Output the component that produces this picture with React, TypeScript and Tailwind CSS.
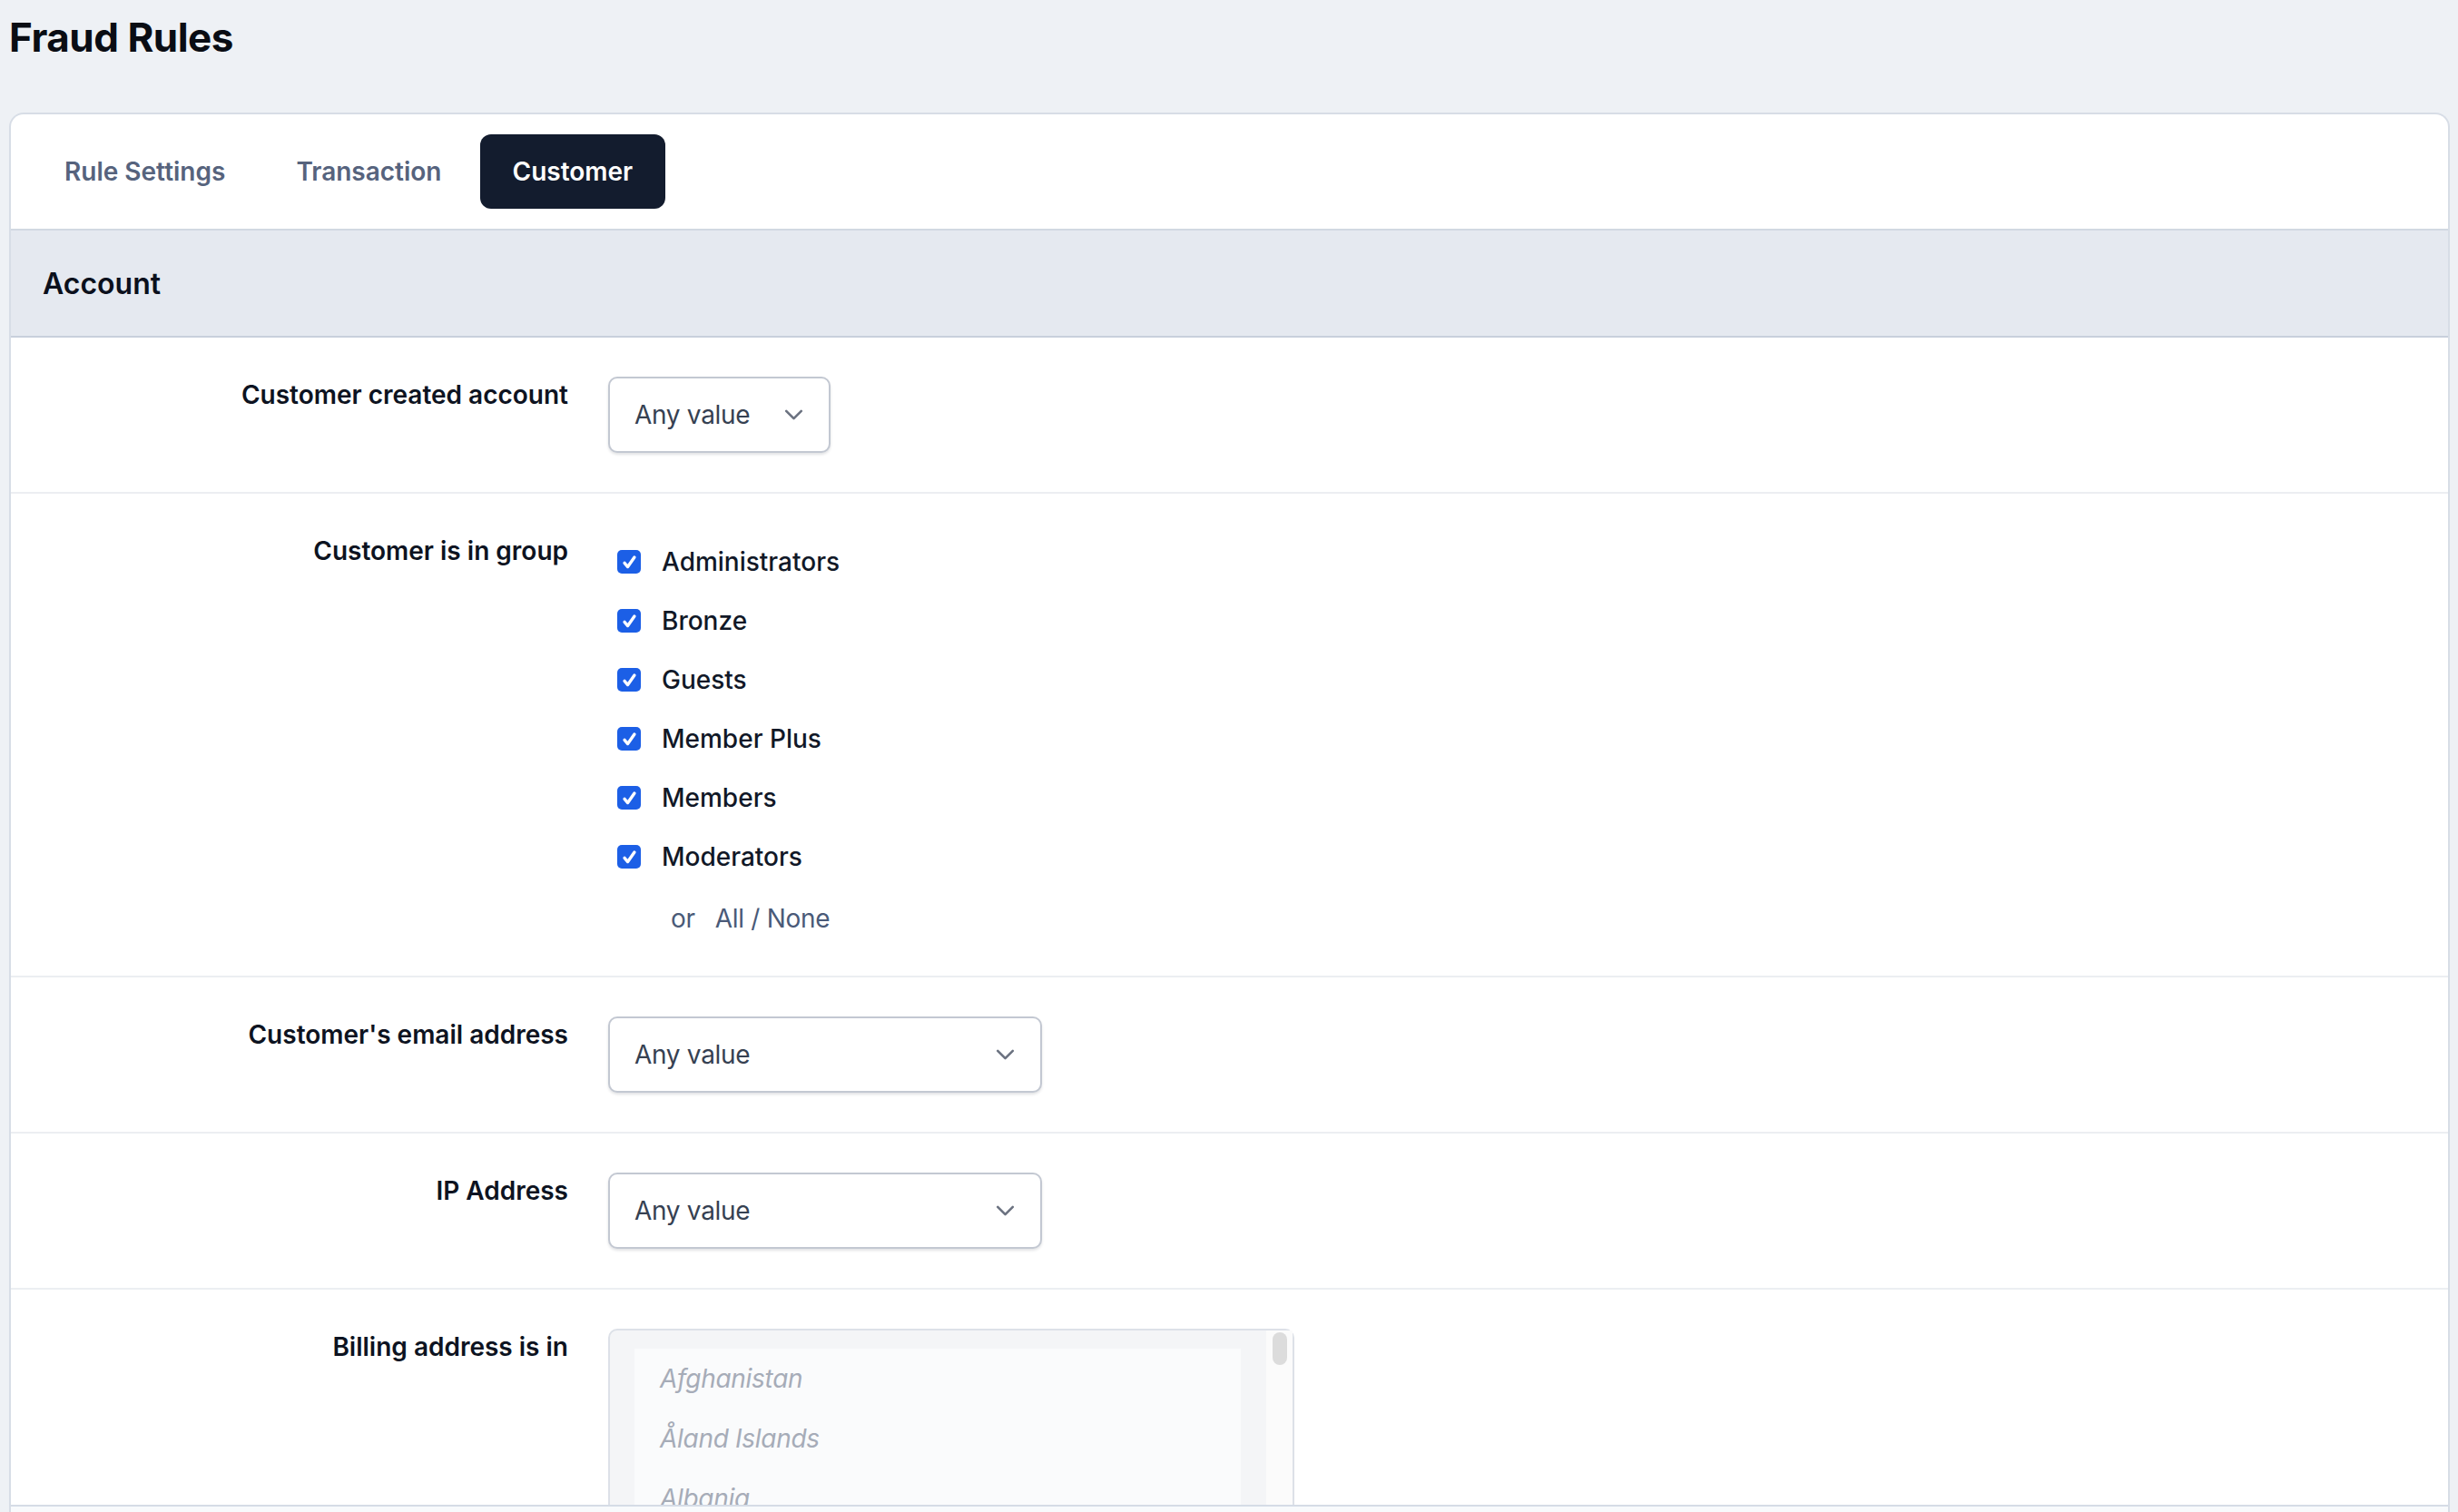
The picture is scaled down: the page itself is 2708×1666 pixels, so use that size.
import React, { useState } from 'react';

const groups = ['Administrators', 'Bronze', 'Guests', 'Member Plus', 'Members', 'Moderators'];
const countries = ['Afghanistan', 'Åland Islands', 'Albania', 'Algeria', 'American Samoa'];
const tabs = ['Rule Settings', 'Transaction', 'Customer'];

const font = { fontFamily: 'Inter, "Noto Sans", sans-serif' };

const Chevron = () => (
  <svg viewBox="0 0 22 13" fill="none" className="w-[21px] h-[12px] shrink-0">
    <path d="M2 2l9 9 9-9" stroke="#6b7280" strokeWidth="2.8" strokeLinecap="round" strokeLinejoin="round" />
  </svg>
);

const Select = ({ wide }: { wide?: boolean }) => (
  <button
    className={`h-[84px] flex items-center justify-between pl-[27px] pr-[28px] rounded-[10px] border-2 border-[#c3c8d2] bg-white shadow-[0_2px_3px_rgba(15,23,42,0.12)] ${wide ? 'w-[478px]' : 'w-[245px]'}`}
  >
    <span className="text-[28px] leading-[40px] text-[#364152] tracking-[-0.3px]">Any value</span>
    <Chevron />
  </button>
);

const Row = ({ label, children, last }: { label: string; children: React.ReactNode; last?: boolean }) => (
  <div className={`flex py-[43px] ${last ? '' : 'border-b-2 border-[#eceef2]'}`}>
    <div className="w-[658px] shrink-0 pr-[44px] text-right text-[28px] leading-[40px] font-semibold text-[#0d1321]">
      {label}
    </div>
    <div className="flex-1">{children}</div>
  </div>
);

const Check = () => (
  <span className="w-[26px] h-[26px] rounded-[5px] bg-[#1c5fe6] flex items-center justify-center shrink-0">
    <svg viewBox="0 0 20 20" fill="none" className="w-[21px] h-[21px]">
      <path d="M4.8 10.8l3.4 4 7-10" stroke="white" strokeWidth="3.2" strokeLinecap="round" strokeLinejoin="round" />
    </svg>
  </span>
);

export default function App() {
  const [active, setActive] = useState(2);

  return (
    <div className="h-[1666px] overflow-hidden flex flex-col bg-[#eef1f5] pl-[10px] pr-[9px]" style={font}>
      <h1 className="pt-[15px] mb-[57px] text-[44px] leading-[52px] font-bold text-[#0a0d14] tracking-[-0.5px]">
        Fraud Rules
      </h1>

      <div className="flex-1 min-h-0 flex flex-col bg-white border-2 border-b-0 border-[#d7dde6] rounded-t-[16px] overflow-hidden">
        {/* Tabs */}
        <div className="flex gap-[6px] px-[23px] py-[22px] border-b-2 border-[#d1d8e2]">
          {tabs.map((t, i) => (
            <button
              key={t}
              onClick={() => setActive(i)}
              className={`h-[82px] px-[36px] rounded-[12px] text-[28px] leading-[40px] font-semibold ${
                active === i ? 'bg-[#131c2e] text-white' : 'text-[#56637d]'
              }`}
            >
              {t}
            </button>
          ))}
        </div>

        {/* Section header */}
        <div className="bg-[#e5e9f0] border-b-2 border-[#c8d0dc] px-[35px] pt-[39px] pb-[37px]">
          <h2 className="text-[32px] leading-[40px] font-semibold text-[#0b101c]">Account</h2>
        </div>

        <div className="flex-1 min-h-0 overflow-hidden">
          <Row label="Customer created account">
            <Select />
          </Row>

          <Row label="Customer is in group">
            <div className="pt-[12px] pl-[10px] flex flex-col gap-[25px]">
              {groups.map((g) => (
                <label key={g} className="flex items-center gap-[23px] h-[40px]">
                  <Check />
                  <span className="text-[28px] leading-[40px] font-medium text-[#111827]">{g}</span>
                </label>
              ))}
              <div className="pl-[59px] mt-[3px] text-[28px] leading-[40px] text-[#4a5a78] tracking-[-0.3px]">
                or<span className="ml-[22px]">All / None</span>
              </div>
            </div>
          </Row>

          <Row label="Customer's email address">
            <Select wide />
          </Row>

          <Row label="IP Address">
            <Select wide />
          </Row>

          <Row label="Billing address is in" last>
            <div className="w-[756px] h-[500px] rounded-[10px] border-2 border-[#dde1e8] bg-[#f4f5f7] flex pt-[20px] pl-[27px]">
              <div className="w-[668px] bg-[#fafbfc] flex flex-col">
                {countries.map((c) => (
                  <div key={c} className="px-[28px] py-[13px] text-[28px] leading-[40px] italic text-[#a6acb8] tracking-[-0.3px]">
                    {c}
                  </div>
                ))}
              </div>
              <div className="ml-auto w-[29px] -mt-[20px] bg-[#fbfbfb] flex justify-center pt-[2px]">
                <div className="w-[16px] h-[36px] rounded-full bg-[#dcdcdc]" />
              </div>
            </div>
          </Row>
        </div>

        {/* Sticky footer */}
        <div className="h-[8px] shrink-0 border-t-2 border-[#d5dce6] bg-[#f8fafc]" />
      </div>
    </div>
  );
}
